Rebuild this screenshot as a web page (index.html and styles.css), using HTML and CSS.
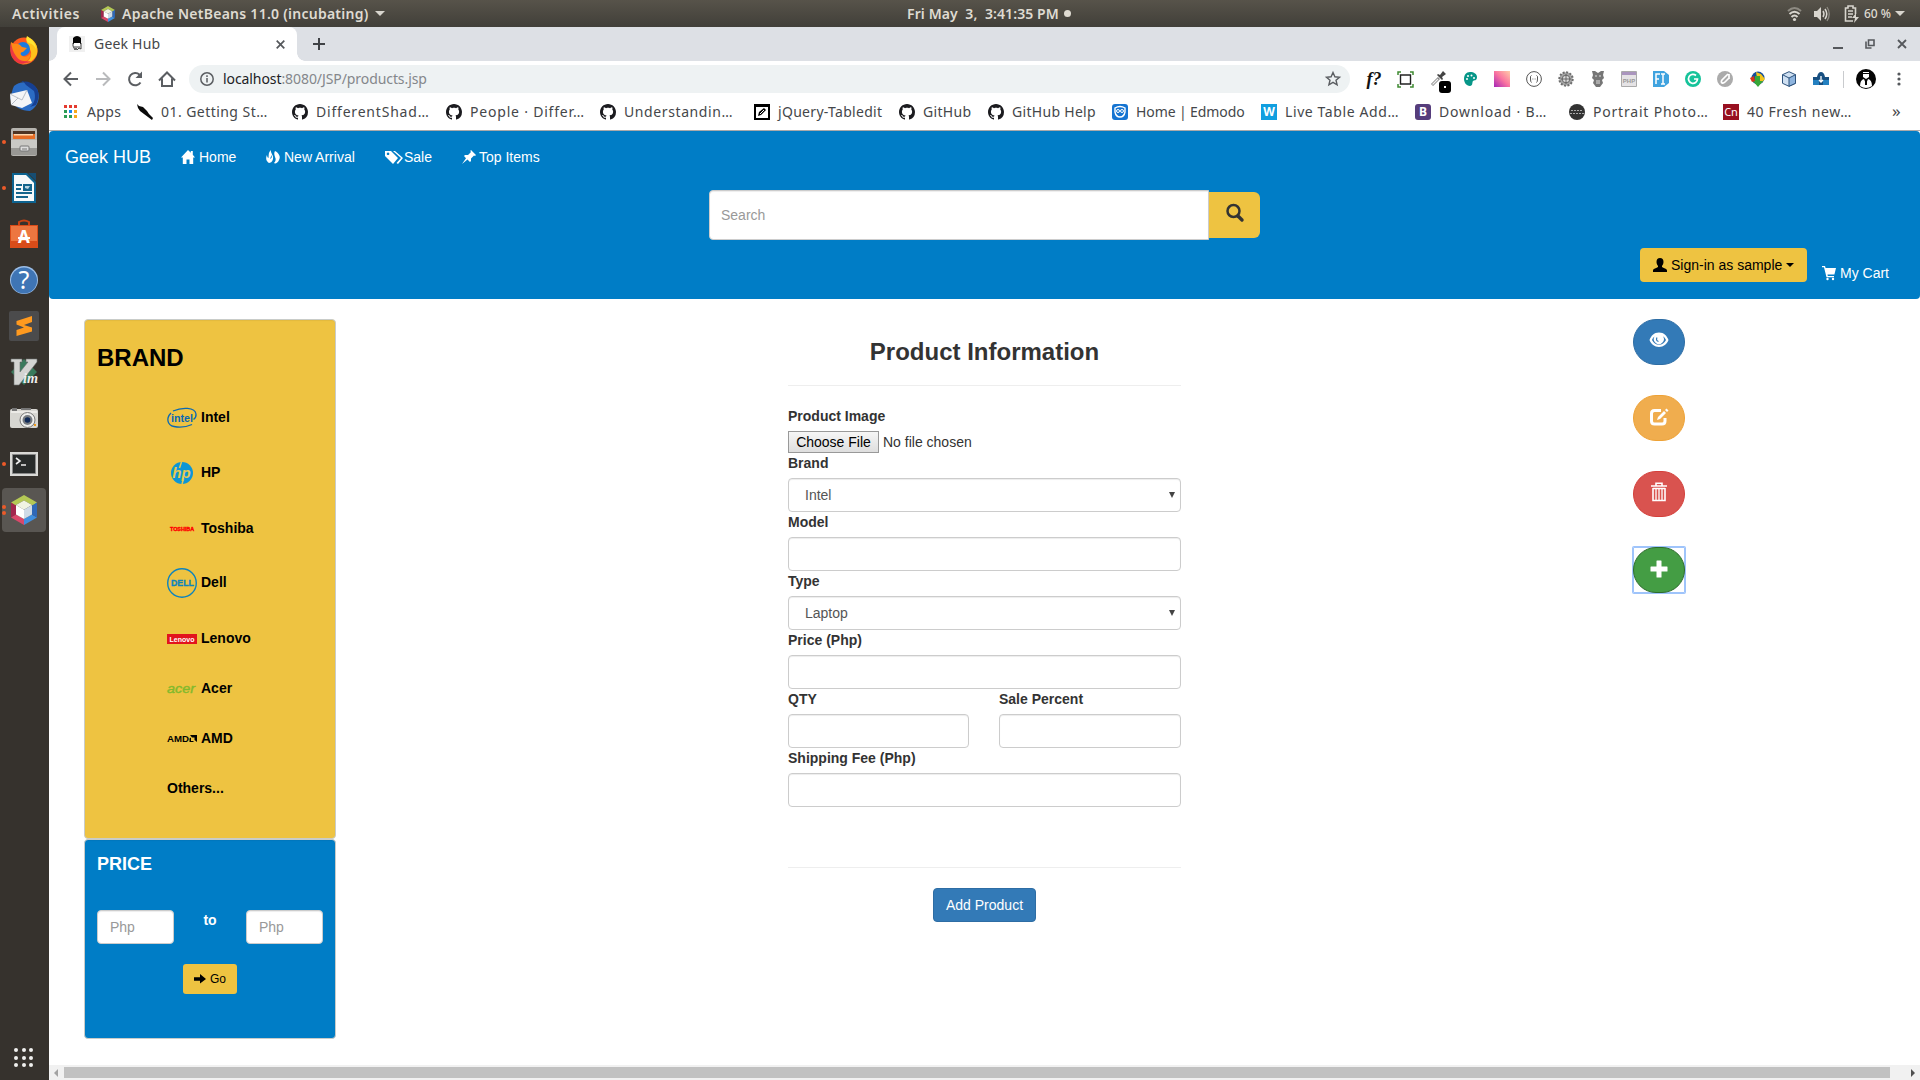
FILE: index.html
```html
<!DOCTYPE html>
<html lang="en">
<head>
<meta charset="utf-8">
<title>Geek Hub</title>
<link rel="stylesheet" href="styles.css">
</head>
<body>
<svg class="defs" width="0" height="0">
  <symbol id="netbeans" viewBox="0 0 26 30"><path fill="#b4c855" d="M0 7.500 13 0l13 7.500-4 3L13 5.500 4 10.500z"/><path fill="#a2264d" d="M0 7.500 5 10.500V19.500L0 22.500z"/><path fill="#d9486a" d="M0 22.500 5 19.500 13 24v6z"/><path fill="#3f8fe0" d="M13 30V24l8-4.500 5 3z"/><path fill="#2f68b8" d="M26 7.500v15l-5-3v-9z"/><path fill="#f0f3e2" d="M5 10l8-4.500 8 4.500-8 4.700z"/><path fill="#fff" d="M5 10l8 4.700V24l-8-4.500z"/><path fill="#cfdbe7" d="M21 10l-8 4.700V24l8-4.500z"/></symbol>
  <symbol id="github" viewBox="0 0 16 16"><path fill="#1b1b1f" d="M8 0C3.580 0 0 3.580 0 8c0 3.540 2.290 6.530 5.470 7.590.4.070.55-.17.55-.38 0-.19-.01-.82-.01-1.490-2.010.37-2.530-.49-2.690-.94-.09-.23-.48-.94-.82-1.130-.28-.15-.68-.52-.01-.53.63-.01 1.080.58 1.230.82.72 1.210 1.870.87 2.330.66.07-.52.28-.87.51-1.070-1.780-.2-3.640-.89-3.640-3.950 0-.87.31-1.590.82-2.150-.08-.2-.36-1.020.08-2.120 0 0 .67-.21 2.200.82.64-.18 1.320-.27 2-.27s1.360.09 2 .27c1.530-1.040 2.200-.82 2.200-.82.44 1.100.16 1.920.08 2.120.51.56.82 1.270.82 2.150 0 3.070-1.870 3.750-3.650 3.950.29.25.54.73.54 1.480 0 1.070-.01 1.930-.01 2.200 0 .21.15.46.55.38A8 8 0 0 0 16 8c0-4.420-3.580-8-8-8"/></symbol>
</svg>
<div class="desktop">
  <header class="topbar">
    <div class="topbar-left">
      <span class="activities">Activities</span>
      <svg width="14" height="16"><use href="#netbeans"/></svg>
      <span class="appname">Apache NetBeans 11.0 (incubating)</span>
      <i class="caret-light"></i>
    </div>
    <div class="clock"><span>Fri May&nbsp; 3,&nbsp; 3:41:35 PM</span><i class="clock-dot"></i></div>
    <div class="topbar-right">
      <svg class="ico-wifi" width="15" height="16" viewBox="0 0 15 16" fill="none" stroke="#d8d5ce" stroke-width="2"><path d="M1 5Q7.500-1 14 5" stroke="#8d8a82"/><path d="M2.500 8Q7.500 3.500 12.500 8M4.500 11q3-3 6 0"/><circle cx="7.500" cy="13.500" r="1.600" fill="#d8d5ce" stroke="none"/></svg>
      <svg class="ico-vol" width="16" height="16" viewBox="0 0 16 16"><path fill="#d8d5ce" d="M0 5h3l4-4v14l-4-4H0z"/><path fill="none" stroke="#d8d5ce" stroke-width="1.500" d="M9 5q2 3 0 6M11 3q3.500 5 0 10"/><path fill="none" stroke="#8d8a82" stroke-width="1.300" d="M13 1q4.500 7 0 14"/></svg>
      <svg class="ico-bat" width="16" height="18" viewBox="0 0 16 18"><path fill="none" stroke="#d8d5ce" stroke-width="1.600" d="M9 16H1.500V3H4V1h5v2h2.500v6M4 6h5M4 9h5M4 12h4"/><path fill="#d8d5ce" d="M12 8l-4 5h3l-1 5 5-6h-3z"/></svg>
      <span class="pct">60 %</span><i class="caret-light"></i>
    </div>
  </header>
  <div class="below">
    <aside class="dock">
      <div class="dock-item"><svg width="30" height="30" viewBox="0 0 30 30"><circle cx="15" cy="16" r="13.500" fill="#ff5a1f"/><path fill="#ffc21a" d="M18 2c8 2 12 10 10 17-3 7-10 11-16 10 7-1 11-6 10-12-1-5-6-8-4-15z"/><path fill="#ffe433" d="M18 1c6 4 9 8 9 13-2-4-4-5-7-6-3-2-3-4-2-7z"/><circle cx="14" cy="14" r="7" fill="#1a7be0"/><path fill="#ff8a16" d="M2 7l3 2c3-1 6 0 8 3l5 1-4 4c-2 0-3 1-2 3 3 3 7 2 10-2-1 7-5 10-11 9C3 25 0 16 2 7z"/><path fill="#e8244d" d="M2 8c-2 8 0 15 6 19 5 3 11 2 14-1-6 1-12 0-15-5-3-4-4-8-5-13z" opacity=".8"/></svg></div>
      <div class="dock-item"><svg width="32" height="32" viewBox="0 0 32 32"><path fill="#2b6cc4" d="M6 6C12 0 24 1 29 9c4 8 1 18-7 22-8 0-17-4-20-13 2-5 2-8 4-12z"/><path fill="#163f91" d="M10 4l5-3 3 4 8 6c2 6 1 12-4 16l6-2c4-8 3-15-1-19-5-5-11-6-17-2z"/><path fill="#f4f5f7" d="M2 14l17-4 5 13-10 5L3 25z"/><path fill="none" stroke="#b7bdc6" d="M2 14l12 6 5-10M3 25l7-7"/></svg></div>
      <div class="dock-item run"><svg width="28" height="28" viewBox="0 0 28 28"><rect x="1" width="26" height="28" rx="2" fill="#b5b3ae"/><path fill="#4e3423" d="M3 3h22v8H3z"/><path fill="#e66d25" d="M3 6h22v5H3z"/><path fill="#ffd7ac" d="M4 6h19v1.500H4z"/><path fill="#cac9c5" d="M1 12h26v8H1z"/><path fill="#999894" d="M1 20h26v7H1z"/><rect x="10" y="18" width="9" height="5" rx="1" fill="#ddd" stroke="#777"/><path stroke="#777" d="M12 21h5"/></svg></div>
      <div class="dock-item run"><svg width="24" height="30" viewBox="0 0 24 30"><path fill="#0d6390" d="M0 0h15l9 9v21H0z"/><path fill="#f7f9fa" d="M2 2h12l8 8v18H2z"/><path fill="#174d72" d="M16 0h8v8z"/><path stroke="#14658d" stroke-width="2" d="M4 12h6M4 16h5M4 20h16M4 24h12"/><path fill="#14658d" d="M11 11h9v7h-9z"/><path fill="#b9d4e2" d="M13 13h5l-2 3-3-1z"/></svg></div>
      <div class="dock-item"><svg width="28" height="28" viewBox="0 0 28 28"><path fill="none" stroke="#c84214" stroke-width="2" d="M9 7V2q5-3 10 0v5"/><path fill="#d94c19" d="M0 5h28v23H0z"/><path fill="#ed7640" d="M1 6h26v15H1z"/><text x="14" y="23" text-anchor="middle" class="bag-letter">A</text><path stroke="#fff" stroke-width="2" d="M8 18h12"/></svg></div>
      <div class="dock-item"><svg width="28" height="28" viewBox="0 0 28 28"><circle cx="14" cy="14" r="14" fill="#9dbfe8"/><circle cx="14" cy="14.500" r="13" fill="#3f75b5"/><text x="14" y="23" text-anchor="middle" class="help-letter">?</text></svg></div>
      <div class="dock-item"><svg width="30" height="30" viewBox="0 0 30 30"><rect width="30" height="30" rx="2" fill="#4b4b4c"/><path fill="#ff9a1f" d="M7.500 10L23 5v6l-8 3 8 2.500v4L7.500 25v-6l7.500-2.500-7.500-3z"/></svg></div>
      <div class="dock-item"><svg width="28" height="28" viewBox="0 0 28 28"><path fill="#397a5c" d="M14 1l13 13-13 13L1 14z"/><path fill="#d3d4d2" stroke="#6c706e" stroke-width=".6" d="M1 1h11v3h-2v10l8-10h-2V1h11v3L9 27H4V4H1z"/><text x="13" y="24.500" class="vim-letter" textLength="15" lengthAdjust="spacingAndGlyphs">im</text></svg></div>
      <div class="dock-item"><svg width="28" height="22" viewBox="0 0 28 22"><rect y="2" width="28" height="19" rx="2" fill="#d7d6d1"/><path fill="#777" d="M2 1h5v3H2zM11 1h10v2H11z"/><path fill="#ecebe7" d="M1 4h26v2H1z"/><circle cx="17.500" cy="13" r="7.500" fill="#efefec" stroke="#777"/><circle cx="17.500" cy="13" r="5" fill="#777b80"/><circle cx="17.500" cy="13" r="2.800" fill="#102a56"/><path fill="#f19c1b" d="M24 17h2v2h-2z"/></svg></div>
      <div class="dock-item run"><svg width="28" height="24" viewBox="0 0 28 24"><path fill="#d9d9d6" d="M0 0h28v24H0z"/><path fill="#282b2a" stroke="#888" d="M2.500 2.500h23v19h-23z"/><path fill="none" stroke="#eee" stroke-width="1.600" d="M6 6l4 3-4 3M11 13h5"/></svg></div>
      <div class="dock-item active"><svg width="26" height="30"><use href="#netbeans"/></svg></div>
      <div class="dock-grid"><i></i><i></i><i></i><i></i><i></i><i></i><i></i><i></i><i></i></div>
    </aside>
    <main class="browser">
      <div class="tabs">
        <div class="tab">
          <svg width="16" height="16" viewBox="0 0 16 16"><path fill="#f0f0f0" d="M0 0h16v16H0z"/><path fill="#050505" d="M4 2q4-4 8 0v6H4z"/><path fill="#fff" d="M5 7h6v4H5z"/><path stroke="#444" fill="none" d="M4 7v3l2 4 1-2 1 2 2-2 2 1V7M5 11h6"/></svg>
          <span class="tab-title">Geek Hub</span>
          <svg class="tab-x" width="9" height="9" viewBox="0 0 9 9" stroke="#55585c" stroke-width="1.700"><path d="M.7.7l7.600 7.600M8.300.7L.7 8.300"/></svg>
        </div>
        <svg class="newtab" width="12" height="12" viewBox="0 0 12 12" stroke="#3f4246" stroke-width="2"><path d="M6 0v12M0 6h12"/></svg>
        <div class="winctl">
          <svg width="10" height="12" viewBox="0 0 10 12"><path fill="#55585c" d="M0 9h10v2H0z"/></svg>
          <svg width="10" height="10" viewBox="0 0 10 10" fill="none" stroke="#55585c" stroke-width="1.600"><path d="M3.500 1h5.500v5.500H3.500zM1 2.500V9h5.500"/></svg>
          <svg width="10" height="10" viewBox="0 0 10 10" stroke="#55585c" stroke-width="1.800"><path d="M1 1l8 8M9 1L1 9"/></svg>
        </div>
      </div>
      <div class="toolbar">
        <div class="navicons">
          <svg width="16" height="16" viewBox="0 0 16 16" fill="none" stroke="#5b5e62" stroke-width="2"><path d="M15 8H2M8 1.500L1.500 8 8 14.500"/></svg>
          <svg width="16" height="16" viewBox="0 0 16 16" fill="none" stroke="#b9babc" stroke-width="2"><path d="M1 8h13M8 1.500L14.500 8 8 14.500"/></svg>
          <svg width="16" height="16" viewBox="0 0 16 16" fill="none" stroke="#5b5e62" stroke-width="2"><path d="M13.500 11.500A6.200 6.200 0 1 1 12.600 3.700"/><path fill="#5b5e62" stroke="none" d="M15 .5V7H8.500z"/></svg>
          <svg width="16" height="16" viewBox="0 0 16 16" fill="none" stroke="#5b5e62" stroke-width="2"><path d="M0 9.500L8 1.500l8 8M3 7.500V15h10V7.500"/></svg>
        </div>
        <div class="omnibox">
          <svg width="14" height="14" viewBox="0 0 14 14" fill="none" stroke="#5b5e62" stroke-width="1.500"><circle cx="7" cy="7" r="6.200"/><path d="M7 6v4.500M7 3.300v1.600"/></svg>
          <span class="url">localhost<span>:8080/JSP/products.jsp</span></span>
          <svg class="star" width="16" height="16" viewBox="0 0 16 16" fill="none" stroke="#5b5e62" stroke-width="1.400"><path d="M8 1.500l1.900 4.300 4.600.4-3.500 3 1.100 4.600L8 11.400l-4.100 2.400L5 9.200l-3.500-3 4.600-.4z"/></svg>
        </div>
        <div class="exts">
          <span class="ext fq">f?</span>
          <span class="ext"><svg width="17" height="17" viewBox="0 0 17 17" fill="none"><path stroke="#222" stroke-width="1.400" d="M3.500 4h10v9h-10z"/><path stroke="#3f8a32" stroke-width="1.500" d="M1 4V1h3M13 1h3v3M16 13v3h-3M4 16H1v-3"/></svg></span>
          <span class="ext drop"><svg width="16" height="16" viewBox="0 0 16 16"><path fill="none" stroke="#898989" stroke-width="3" d="M2 14l7-7"/><path stroke="#eee" stroke-width="1.200" d="M2.500 13.500L8 8"/><path fill="#444" d="M8 3l2 1 3-4 3 3-4 3 1 2-1 1-5-5z"/></svg><b class="badge"></b></span>
          <span class="ext"><svg width="14" height="14" viewBox="0 0 14 14"><path fill="#079688" d="M7 0c4 0 7 2 7 5 0 4-3 3-4 4s0 5-3 5C3 14 1 10 1 7c0-4 2-7 6-7z"/><g fill="#fff"><circle cx="4" cy="7" r="1"/><circle cx="5" cy="4" r="1"/><circle cx="8.500" cy="3.500" r="1"/><circle cx="11" cy="6" r="1"/></g></svg></span>
          <span class="ext"><i class="grad"></i></span>
          <span class="ext"><svg width="16" height="16" viewBox="0 0 16 16" fill="none" stroke="#555"><circle cx="8" cy="8" r="7.400"/><path d="M5.500 4.500q-1.500 0-1 3.500 0 3 1 3.500M10.500 4.500q1.500 0 1 3.500 0 3-1 3.500M6.500 8h.8M8.700 8h.8"/></svg></span>
          <span class="ext"><svg width="16" height="16" viewBox="0 0 16 16"><circle cx="8" cy="8" r="6.700" fill="#a7a7a7" stroke="#6d6d6d" stroke-width="2" stroke-dasharray="2 1.500"/><circle cx="8" cy="8" r="3.800" fill="#ddd" stroke="#666"/><path stroke="#666" d="M8 3v10M3 8h10"/></svg></span>
          <span class="ext"><svg width="14" height="16" viewBox="0 0 14 16"><path fill="#767676" d="M1 0h3l3 2 3-2h3l-1 4 1 3-2 2 1 3-3 4H5l-3-4 1-3-2-2 1-3z"/><path fill="#aaa" d="M4 4h2v2H4zM8 4h2v2H8zM5 9h4v4H5z"/></svg></span>
          <span class="ext"><svg width="16" height="16" viewBox="0 0 16 16"><path fill="#e5e3e5" stroke="#aaa" d="M.5.5h15v15H.5z"/><path fill="#aa95be" d="M1 1h14v3H1z"/><text x="8" y="12" text-anchor="middle" class="php">PHP</text></svg></span>
          <span class="ext"><svg width="16" height="16" viewBox="0 0 16 16"><path fill="#40a3df" d="M0 0h11l5 4v8l-5 4H0z"/><path fill="none" stroke="#fff" stroke-width="1.500" d="M3 13V3h4M3 8h3M8 3h4M10 3v10M8 13h4"/></svg></span>
          <span class="ext"><svg width="16" height="16" viewBox="0 0 16 16"><circle cx="8" cy="8" r="8" fill="#15c39a"/><path fill="none" stroke="#fff" stroke-width="1.700" d="M11 4.500A4.500 4.500 0 1 0 12.500 8H9"/></svg></span>
          <span class="ext"><svg width="16" height="16" viewBox="0 0 16 16"><circle cx="8" cy="8" r="8" fill="#ababab"/><path fill="none" stroke="#fff" stroke-width="1.700" d="M11 3L5 9c-2 3 1 4 3 2l4-4M12 3v5"/></svg></span>
          <span class="ext"><svg width="16" height="16" viewBox="0 0 16 16"><circle cx="9" cy="7" r="6.500" fill="#154e9b"/><path fill="#f4c51b" d="M7 1l5 2 4 5-5 5-3-6z"/><path fill="#38a638" d="M6 5h5v5h3l-5 6-5-6h2z"/><path fill="#d63418" d="M1 7l4-2 1 5-3 1z"/></svg></span>
          <span class="ext"><svg width="16" height="16" viewBox="0 0 16 16" stroke="#2d527c"><path fill="#cfe0f2" d="M8 .7l6.500 3v8.600L8 15.300l-6.500-3V3.700z"/><path fill="#8eb4de" d="M8 7v8.300l6.500-3V3.700zM1.500 3.700L8 7"/></svg></span>
          <span class="ext"><svg width="16" height="14" viewBox="0 0 16 14"><path fill="#174f81" d="M0 13V5h4q1-5 4-5 3 0 4 5h4v8z"/><path fill="#2480c0" d="M0 8h6v5H0zM10 8h6v5h-6z"/><path stroke="#fff" stroke-width="1.300" d="M8 4v6M6 8l2 2 2-2" fill="none"/></svg></span>
        </div>
        <i class="sep"></i>
        <svg class="avatar" width="20" height="20" viewBox="0 0 20 20"><circle cx="10" cy="10" r="10" fill="#050505"/><path fill="#fff" d="M7 3h6v1H7zM7 5h6v3l-3 2-3-2zM4 17q0-6 4-7l2 5 2-5q4 1 4 7-6 4-12 0z"/><path fill="#050505" d="M9 11h2v5H9z"/></svg>
        <svg class="menu" width="4" height="16" viewBox="0 0 4 16" fill="#55585c"><circle cx="2" cy="3" r="1.600"/><circle cx="2" cy="8" r="1.600"/><circle cx="2" cy="13" r="1.600"/></svg>
      </div>
      <div class="bookmarks">
        <div class="bm w73"><svg width="14" height="14" viewBox="0 0 14 14"><path fill="#e43b30" d="M0 0h3v3H0zM5 0h3v3H5zM10 0h3v3h-3z"/><path fill="#2b9c55" d="M0 5h3v3H0zM0 10h3v3H0zM5 10h3v3H5z"/><path fill="#1884f0" d="M5 5h3v3H5z"/><path fill="#f6a81c" d="M10 5h3v3h-3zM10 10h3v3h-3z"/></svg><span>Apps</span></div>
        <div class="bm w155 ls4"><svg width="16" height="16" viewBox="0 0 16 16"><path fill="#0a0a0a" d="M0 0l2 2 4 1 4 4 2 3 4 4-1 2-4-3-4-3-4-3-2-3z"/></svg><span>01. Getting St…</span></div>
        <div class="bm w154 ls7"><svg width="16" height="16"><use href="#github"/></svg><span>DifferentShad…</span></div>
        <div class="bm w154 ls7"><svg width="16" height="16"><use href="#github"/></svg><span>People · Differ…</span></div>
        <div class="bm w154 ls5"><svg width="16" height="16"><use href="#github"/></svg><span>Understandin…</span></div>
        <div class="bm w145 ls3"><svg width="16" height="16" viewBox="0 0 16 16"><path fill="#fff" stroke="#000" stroke-width="2" d="M1 1h14v14H1z"/><path fill="#000" d="M0 0h16v3H0zM4 12l1-4 5-4 2 2-5 5z"/><path stroke="#fff" d="M6 10l4-4"/></svg><span>jQuery-Tabledit</span></div>
        <div class="bm w89 ls3"><svg width="16" height="16"><use href="#github"/></svg><span>GitHub</span></div>
        <div class="bm w124 ls3"><svg width="16" height="16"><use href="#github"/></svg><span>GitHub Help</span></div>
        <div class="bm w149"><svg width="16" height="16" viewBox="0 0 16 16"><rect width="16" height="16" rx="3" fill="#1674d1"/><path fill="none" stroke="#fff" stroke-width="1.400" d="M3 4q5-3 10 0v4q-1 5-5 5T3 8z"/><circle cx="6" cy="7" r="1.500" fill="none" stroke="#fff"/><circle cx="10" cy="7" r="1.500" fill="none" stroke="#fff"/></svg><span class="edmodo">Home | Edmodo</span></div>
        <div class="bm w154 ls5"><b class="sq sq-w">W</b><span>Live Table Add…</span></div>
        <div class="bm w154 ls7"><b class="sq sq-b">B</b><span>Download · B…</span></div>
        <div class="bm w154 ls7"><svg width="16" height="16" viewBox="0 0 16 16"><circle cx="8" cy="8" r="8" fill="#333"/><path stroke="#aaa" stroke-dasharray="2 1" d="M2 6.500h12M1 9.500h14"/></svg><span>Portrait Photo…</span></div>
        <div class="bm w154 ls5"><b class="sq sq-c">Cn</b><span>40 Fresh new…</span></div>
        <span class="more">»</span>
      </div>
      <div class="page">
        <nav class="navbar">
          <div class="navlinks">
            <span class="brandname">Geek HUB</span>
            <span class="nl n1"><svg width="14" height="14" viewBox="0 0 14 14"><path fill="#fff" d="M7 0l2.800 2.800V1h2v3.800L14 7.500h-1.800V14H8.500V9.500h-3V14H1.800V7.500H0z"/></svg>Home</span>
            <span class="nl n2"><svg width="14" height="14" viewBox="0 0 14 14"><path fill="#fff" d="M5 0c-1 3 3 5 2 9-.5 3-3 4-4 4C0 11-.5 8 1 5c0 2 1 3 1.500 3C3 5 2 3 5 0zM9 1c4 2 6 6 4 9-1 3-4 4-5 3 2-2 2-4 1-6-1-3-1-4 0-6zM4 9c2-1 2-2 1.500-4"/></svg>New Arrival</span>
            <span class="nl n3"><svg width="18" height="14" viewBox="0 0 18 14"><path fill="#fff" fill-rule="evenodd" d="M0 1h6l7 7-5 6-8-8zm3 1.500a1.300 1.300 0 1 0 .1 0z"/><path fill="#fff" d="M8 1h2l8 7-5 6-1.500-1L16 8z"/></svg>Sale</span>
            <span class="nl n4"><svg width="14" height="14" viewBox="0 0 14 14"><path fill="#fff" d="M9 0l5 5-1 1-1-.5L9 8.500V11l-1 1-2.500-2.500L0 14l4-5.800L2 6l1-1h3l3-3-.7-1z"/></svg>Top Items</span>
          </div>
          <div class="searchrow">
            <div class="searchbox">Search</div>
            <div class="searchbtn"><svg width="18" height="18" viewBox="0 0 18 18" fill="none" stroke="#333"><circle cx="7.500" cy="7" r="6" stroke-width="2.500"/><path stroke-width="3.400" stroke-linecap="round" d="M12 12l4 4"/></svg></div>
          </div>
          <div class="userrow">
            <div class="signin"><svg width="14" height="14" viewBox="0 0 14 14"><path fill="#000" d="M7 0q3.500 0 3.500 4c0 2-1 3-1.500 4v1c1 1 5 1.500 5 3.500V14H0v-1.500C0 10.500 4 10 5 9V8C4.500 7 3.500 6 3.500 4Q3.500 0 7 0z"/></svg><span>Sign-in as sample</span><i class="caret"></i></div>
            <div class="cart"><svg width="14" height="14" viewBox="0 0 14 14"><path fill="#fff" d="M0 0h3l.6 2H14l-1.600 6.500H5.500l.3 1.500H12v1.200H4.500L2 1.200H0z"/><circle cx="5.500" cy="13" r="1.200" fill="#fff"/><circle cx="11" cy="13" r="1.200" fill="#fff"/></svg><span>My Cart</span></div>
          </div>
        </nav>
        <div class="content">
          <section class="side">
            <div class="well well-brand">
              <h3>BRAND</h3>
              <ul>
                <li class="g35"><svg width="30" height="20" viewBox="0 0 30 20"><path fill="none" stroke="#0a68b2" stroke-width="1.300" d="M6 3C15-1 28-1 29 6q.5 3-2.500 5.500M4 5C-1 10 0 17 7 18.500q9 2 18-2"/><text x="4" y="13.500" class="lg-intel" textLength="22" lengthAdjust="spacingAndGlyphs">intel</text></svg>Intel</li>
                <li class="g36"><svg width="30" height="22" viewBox="0 0 30 22"><circle cx="15" cy="11" r="11" fill="#0c96d5"/><text x="14.500" y="16" text-anchor="middle" class="lg-hp">hp</text><path stroke="#e6c953" stroke-width="1.500" d="M14.500 0l-2 6M15 22l1.500-5"/></svg>HP</li>
                <li class="g34"><svg width="30" height="6" viewBox="0 0 30 6"><text x="3" y="5" class="lg-tosh" textLength="24" lengthAdjust="spacingAndGlyphs">TOSHIBA</text></svg>Toshiba</li>
                <li class="g36"><svg width="30" height="30" viewBox="0 0 30 30"><circle cx="15" cy="15" r="14.300" fill="none" stroke="#0d83bd" stroke-width="1.400"/><text x="4" y="18" class="lg-dell" textLength="23" lengthAdjust="spacingAndGlyphs">DELL</text></svg>Dell</li>
                <li class="g30"><svg width="30" height="10" viewBox="0 0 30 10"><path fill="#e2141d" d="M0 0h30v10H0z"/><text x="2.500" y="7.500" class="lg-len" textLength="25" lengthAdjust="spacingAndGlyphs">Lenovo</text></svg>Lenovo</li>
                <li class="g30"><svg width="30" height="10" viewBox="0 0 30 10"><text x="0" y="9" class="lg-acer" textLength="28" lengthAdjust="spacingAndGlyphs">acer</text></svg>Acer</li>
                <li class="g30"><svg width="30" height="8" viewBox="0 0 30 8"><text x="0" y="7" class="lg-amd" textLength="22" lengthAdjust="spacingAndGlyphs">AMD</text><path d="M23 0h7v7l-2.500-2V2.500h-2.500zM22.500 3.500L24 2.500V6h3l-1 1h-3.500z"/></svg>AMD</li>
                <li>Others...</li>
              </ul>
            </div>
            <div class="well well-price">
              <h4>PRICE</h4>
              <div class="range"><div class="control ph">Php</div><b>to</b><div class="control ph">Php</div></div>
              <div class="go"><svg width="12" height="10" viewBox="0 0 12 10"><path d="M0 3.300h6V0l6 5-6 4.500V6.700H0z"/></svg>Go</div>
            </div>
          </section>
          <section class="form">
            <h2>Product Information</h2>
            <hr>
            <label>Product Image</label>
            <div class="file"><span class="filebtn">Choose File</span><span>No file chosen</span></div>
            <label>Brand</label>
            <div class="control select"><span>Intel</span><i></i></div>
            <label>Model</label>
            <div class="control"></div>
            <label>Type</label>
            <div class="control select"><span>Laptop</span><i></i></div>
            <label>Price (Php)</label>
            <div class="control"></div>
            <div class="pair">
              <div><label>QTY</label><div class="control"></div></div>
              <div><label>Sale Percent</label><div class="control"></div></div>
            </div>
            <label>Shipping Fee (Php)</label>
            <div class="control"></div>
            <hr class="hr2">
            <div class="add">Add Product</div>
          </section>
          <section class="actions">
            <div class="round blue"><svg width="20" height="16" viewBox="0 0 20 16"><path fill="#fff" fill-rule="evenodd" d="M10 .5c5 0 8 3.500 9.500 7.500-1.500 4-5 7-9.500 7S2 12 .5 8C2 4 5 .5 10 .5zM3 8c1.500 3 4 4.700 7 4.700S15.500 11 17 8c-.6-1.600-1.800-3-3-3.800A5 5 0 1 1 5.500 4.500C4.300 5.500 3.500 6.500 3 8z"/><path fill="none" stroke="#337ab7" stroke-width="1.200" d="M8 5.500q-1.500 3 1.500 4"/></svg></div>
            <div class="round orange"><svg width="20" height="18" viewBox="0 0 20 18"><path fill="none" stroke="#fff" stroke-width="3" d="M12 2.500H5.500q-3 0-3 3v7.500q0 3 3 3H13q3 0 3-3V10"/><path fill="#fff" d="M8 12l1-3 6-6 2 2-6 6zM16 2l1.500-1.500 2 2L18 4z"/></svg></div>
            <div class="round red"><svg width="18" height="20" viewBox="0 0 18 20" fill="none" stroke="#fff"><path stroke-width="1.600" d="M1 4h16M6 4V1.300h6V4M3 6v12.500h12V6"/><path stroke-width="1.500" d="M3 6.500h12"/><path stroke-width="1.300" d="M6 7v11M9 7v11M12 7v11"/></svg></div>
            <div class="focus"><div class="round green"><svg width="18" height="18" viewBox="0 0 18 18"><path fill="#fff" d="M7 .5h4q.5 0 .5.500v5.500H17q.5 0 .5.500v4q0 .5-.5.500h-5.500V17q0 .5-.5.500H7q-.5 0-.5-.5v-5.500H1q-.5 0-.5-.5V7q0-.5.500-.5h5.500V1q0-.5.500-.5z"/></svg></div></div>
          </section>
        </div>
        <div class="hscroll"><i class="ar-l"></i><i class="thumb"></i><i class="ar-r"></i></div>
      </div>
    </main>
  </div>
</div>
</body>
</html>
```
FILE: styles.css
```css
* { box-sizing: border-box; }
body { margin: 0; width: 1920px; height: 1080px; overflow: hidden; background: #fff; }
svg { display: block; flex: none; overflow: visible; }
.defs { position: absolute; }
.desktop { display: flex; flex-direction: column; height: 1080px; }

.topbar { height: 27px; flex: none; display: grid; grid-template-columns: 1fr auto 1fr; align-items: center; background: linear-gradient(#57534a, #413f39); color: #dfdbd2; font: 600 14px/27px "Noto Sans", sans-serif; white-space: nowrap; }
.topbar-left { display: flex; align-items: center; padding-left: 12px; }
.activities { width: 89px; letter-spacing: .55px; }
.appname { width: 249px; margin-left: 7px; letter-spacing: .26px; }
.caret-light { border: 5px solid transparent; border-top-color: #d8d5ce; border-bottom: 0; margin-left: 4px; }
.clock { display: flex; align-items: center; margin-left: 58px; font-size: 14px; letter-spacing: .1px; }
.clock-dot { width: 7px; height: 7px; border-radius: 50%; background: #dfdbd2; margin-left: 5px; }
.topbar-right { display: flex; align-items: center; justify-content: flex-end; padding-right: 15px; }
.ico-vol { margin-left: 12px; }
.ico-bat { margin-left: 14px; }
.pct { font-size: 12px; font-weight: 500; margin-left: 4px; }

.below { flex: 1; display: flex; min-height: 0; }
.dock { width: 49px; flex: none; background: #36322d; display: flex; flex-direction: column; align-items: flex-start; }
.dock-item { position: relative; height: 46px; width: 48px; display: flex; align-items: center; justify-content: center; }
.run::before, .active::before { content: ""; position: absolute; left: 2px; top: 21px; width: 4px; height: 4px; border-radius: 50%; background: #ec5a29; }
.active { height: 44px; width: 44px; margin: 1px 0 0 2px; background: #595652; border-radius: 4px; }
.active::before { left: 0; top: 17px; box-shadow: 0 6px #ec5a29; }
.dock-grid { margin: auto 0 13px 14px; display: grid; grid-template-columns: repeat(3, 4px); gap: 3.500px; }
.dock-grid i { width: 4px; height: 4px; border-radius: 50%; background: #f0f0ee; }
.bag-letter { font: bold 17px "Noto Sans", sans-serif; fill: #fff; }
.help-letter { font: 25px "Noto Sans", sans-serif; fill: #fff; }
.vim-letter { font: italic bold 14px "Liberation Serif", serif; fill: #eee; }

.browser { flex: 1; display: flex; flex-direction: column; min-width: 0; font-family: "Noto Sans", sans-serif; color: #45474a; }
.tabs { height: 34px; flex: none; display: flex; align-items: center; background: #dde0e5; padding-left: 8px; }
.tab { position: relative; height: 34px; width: 240px; display: flex; align-items: center; background: #fff; border-radius: 8px 8px 0 0; padding: 0 12px; font-size: 14px; }
.tab::before, .tab::after { content: ""; position: absolute; bottom: 0; width: 8px; height: 8px; }
.tab::before { left: -8px; background: radial-gradient(circle at 0 0, transparent 7.500px, #fff 8px); }
.tab::after { right: -8px; background: radial-gradient(circle at 100% 0, transparent 7.500px, #fff 8px); }
.tab-title { margin-left: 9px; letter-spacing: .2px; padding-bottom: 2px; }
.tab-x { margin-left: auto; }
.newtab { margin-left: 16px; }
.winctl { margin-left: auto; display: flex; align-items: center; gap: 22px; padding-right: 13px; }
.toolbar { height: 36px; flex: none; display: flex; align-items: center; padding: 0 19px 0 14px; }
.navicons { display: flex; gap: 16px; width: 126px; }
.omnibox { width: 1161px; height: 28px; border-radius: 14px; background: #eef2f3; display: flex; align-items: center; padding: 0 9px 0 11px; font-size: 14px; color: #202124; }
.url { margin-left: 9px; letter-spacing: -.08px; padding-bottom: 1px; }
.url span { color: #84878b; }
.star { margin-left: auto; }
.exts { display: flex; margin-left: 8px; }
.ext { width: 31.950px; height: 32px; display: flex; align-items: center; justify-content: center; position: relative; }
.fq { font: italic bold 18px "Liberation Serif", serif; color: #111; }
.badge { position: absolute; left: 17px; top: 18px; width: 12px; height: 12px; border-radius: 3px; background: #000; display: flex; align-items: center; justify-content: center; }
.badge::after { content: ""; width: 2px; height: 2px; background: #fff; }
.grad { width: 16px; height: 16px; background: linear-gradient(45deg, #a526b8, #fa74a0 50%, #ffcda8); }
.php { font: bold 6px "Liberation Sans", sans-serif; fill: #999; }
.sep { width: 1px; height: 17px; background: #c9cbce; margin-left: 6px; }
.avatar { margin-left: 12px; }
.menu { margin-left: auto; }
.bookmarks { height: 33px; flex: none; display: flex; align-items: center; padding: 0 0 3px 15px; font-size: 14px; white-space: nowrap; }
.bm { display: flex; align-items: center; gap: 8px; flex: none; }
.bm span { padding-bottom: 1px; }
.w73 { width: 73px; gap: 9px; letter-spacing: .4px; }
.w155 { width: 155px; }
.w154 { width: 154px; }
.w145 { width: 145px; }
.w89 { width: 89px; }
.w124 { width: 124px; }
.w149 { width: 149px; }
.ls3 { letter-spacing: .3px; }
.ls4 { letter-spacing: .45px; }
.ls5 { letter-spacing: .6px; }
.ls7 { letter-spacing: .8px; }
.edmodo { letter-spacing: -.1px; }
.sq { width: 16px; height: 16px; color: #fff; font: bold 12px/16px "Noto Sans", sans-serif; text-align: center; letter-spacing: 0; }
.sq-w { background: #119fe0; }
.sq-b { background: #563d7c; border-radius: 3px; }
.sq-c { background: #981020; font-weight: 400; font-size: 11px; }
.more { margin-left: 15px; font-size: 17px; line-height: 20px; padding-bottom: 3px; }

.page { flex: 1; display: flex; flex-direction: column; min-height: 0; border-top: 1px solid #aaa9aa; font: 14px/20px "Liberation Sans", sans-serif; color: #333; background: #fff; }
.navbar { height: 168px; flex: none; background: #007dc6; border-radius: 4px; color: #fff; display: flex; flex-direction: column; }
.navlinks { display: flex; align-items: center; height: 51px; padding-left: 16px; }
.brandname { font-size: 18px; width: 116px; }
.nl { display: flex; align-items: center; }
.nl svg { margin-right: 4px; }
.n1 { width: 85px; }
.n2 { width: 119px; }
.n3 { width: 77px; }
.n3 svg { margin-right: 1px; }
.n4 svg { margin-right: 3px; }
.searchrow { display: flex; align-items: center; margin: 8px 0 0 660px; }
.searchbox { width: 500px; height: 50px; background: #fff; border: 1px solid #ccc; border-radius: 4px 0 0 4px; box-shadow: inset 0 1px 1px rgba(0,0,0,.075); padding: 14px 11px; color: #999; }
.searchbtn { width: 51px; height: 46px; background: #eec341; border-radius: 0 6px 6px 0; display: flex; justify-content: center; padding-top: 12px; }
.userrow { display: flex; align-items: flex-start; justify-content: flex-end; padding: 8px 31px 0 0; }
.signin { width: 167px; height: 34px; background: #eec341; border-radius: 4px; color: #000; display: flex; align-items: center; padding-left: 13px; }
.signin span { margin-left: 4px; }
.caret { border: 4px solid transparent; border-top-color: #000; border-bottom: 0; margin-left: 4px; }
.cart { display: flex; align-items: center; gap: 4px; margin: 15px 0 0 15px; }

.content { flex: 1; display: grid; grid-template-columns: 35px 252px 452px 393px 452px 52px; padding-top: 20px; min-height: 0; }
.side { grid-column: 2; }
.well { border: 1px solid #c9ccc9; border-radius: 4px; box-shadow: inset 0 1px 1px rgba(0,0,0,.05); padding: 0 12px; }
.well-brand { height: 520px; background: #eec341; color: #000; }
.well h3 { font-size: 24px; line-height: 26px; margin: 0; padding-top: 25px; }
.well ul { list-style: none; margin: 36px 0 0; padding: 0 0 0 70px; font-weight: bold; }
.well li { height: 20px; display: flex; align-items: center; gap: 4px; }
.well li svg { position: relative; top: 1px; }
.g30 { margin-bottom: 30px; }
.g34 { margin-bottom: 34px; }
.g35 { margin-bottom: 35px; }
.g36 { margin-bottom: 36px; }
.lg-intel { font: bold 10px "Liberation Sans", sans-serif; fill: #0a68b2; }
.lg-hp { font: italic bold 15px "Liberation Sans", sans-serif; fill: #e6c953; }
.lg-tosh { font: bold 5.500px "Liberation Sans", sans-serif; fill: #f00; stroke: #f00; stroke-width: .4; }
.lg-dell { font: bold 8.500px "Liberation Sans", sans-serif; fill: #0d83bd; stroke: #0d83bd; stroke-width: .3; }
.lg-len { font: bold 7px "Liberation Sans", sans-serif; fill: #fff; }
.lg-acer { font: italic 13px "Liberation Sans", sans-serif; fill: #83b92c; stroke: #83b92c; stroke-width: .4; }
.lg-amd { font: bold 8.500px "Liberation Sans", sans-serif; fill: #000; }
.well-price { height: 200px; background: #007dc6; color: #fff; }
.well h4 { font-size: 18px; line-height: 20px; margin: 0; padding-top: 14px; }
.range { display: flex; justify-content: space-between; margin-top: 36px; }
.range .control { width: 77px; }
.go { width: 54px; height: 30px; margin: 20px auto 0; background: #eec341; border-radius: 3px; color: #000; font-size: 12px; display: flex; align-items: center; justify-content: center; gap: 4px; }
.control { height: 34px; background: #fff; border: 1px solid #ccc; border-radius: 4px; box-shadow: inset 0 1px 1px rgba(0,0,0,.075); padding: 6px 12px; color: #555; }
.ph { color: #999; }

.form { grid-column: 4; }
.form h2 { font-size: 24px; line-height: 26px; margin: 20px 0; text-align: center; }
.form hr { border: 0; border-top: 1px solid #eee; margin: 0 0 20px; }
.form label { display: block; font-weight: bold; height: 25px; line-height: 20px; }
.file { display: flex; gap: 4px; height: 22px; line-height: 22px; }
.filebtn { width: 91px; border: 1px solid #999; background: linear-gradient(#f6f6f6, #dedede); color: #000; text-align: center; line-height: 20px; }
.select { display: flex; align-items: center; justify-content: space-between; padding: 0 5px 0 16px; }
.select i { border: 3px solid transparent; border-top: 6px solid #444; border-bottom: 0; }
.pair { display: grid; grid-template-columns: 181px 182px; gap: 30px; }
.form .hr2 { margin: 60px 0 20px; }
.add { width: 103px; height: 34px; margin: 0 auto; border: 1px solid #2e6da4; border-radius: 4px; background: #337ab7; color: #fff; text-align: center; line-height: 32px; }

.actions { grid-column: 6; display: flex; flex-direction: column; gap: 30px; }
.round { width: 52px; height: 46px; border-radius: 24px; border: 1px solid; display: flex; justify-content: center; align-items: flex-start; padding-top: 12px; }
.blue { background: #337ab7; border-color: #2e6da4; }
.orange { background: #f0ad4e; border-color: #eea236; }
.red { background: #d9534f; border-color: #d43f3a; padding-top: 10px; }
.green { background: #449d44; border-color: #2d6b2d; }
.focus { box-shadow: 0 0 0 1px #9fc4fb, inset 0 0 0 1px #9fc4fb; border-radius: 1px; }
.hscroll { height: 15px; flex: none; background: #f1f1f1; display: flex; align-items: center; padding: 0 5px; }
.thumb { width: 1826px; height: 11px; background: #c1c1c1; margin-left: 6px; }
.ar-l { border: 4px solid transparent; border-right-color: #a3a3a3; border-left: 0; }
.ar-r { border: 4px solid transparent; border-left-color: #505050; border-right: 0; margin-left: auto; }
```
